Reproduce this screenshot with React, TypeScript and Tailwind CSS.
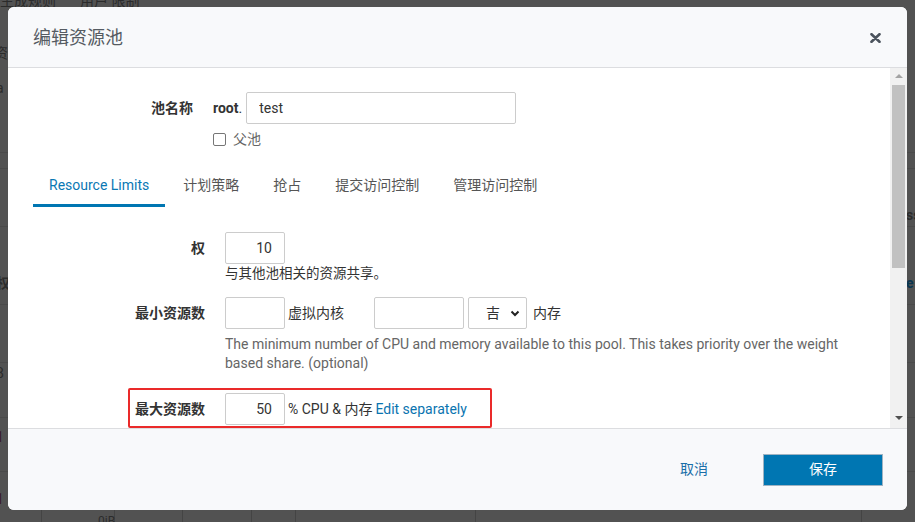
import React from 'react'

const font = "font-['Roboto','Noto_Sans_CJK_SC',sans-serif]"

function Backdrop() {
  // faint page content behind the dimmed overlay
  const rows = [152, 168, 226, 304, 362, 417, 471]
  const cols = [41, 114, 182, 251, 295, 475, 861]
  return (
    <div className="absolute inset-0">
      {rows.map((y) => (
        <div key={y} className="absolute left-0 h-px w-full bg-[#4a4a4a]" style={{ top: y }} />
      ))}
      {cols.map((x) => (
        <div key={x} className="absolute top-[510px] h-[12px] w-px bg-[#444]" style={{ left: x }} />
      ))}
      <span className="absolute -top-[9px] left-[0px] text-[14px] text-[#2b2b2b]">生成规则</span>
      <span className="absolute -top-[9px] left-[80px] text-[14px] text-[#2b2b2b]">用户 限制</span>
      <span className="absolute left-[-6px] top-[43px] text-[14px] text-[#2b2b2b]">资</span>
      <span className="absolute left-[-4px] top-[78px] text-[14px] text-[#2b2b2b]">a</span>
      <span className="absolute left-[-4px] top-[273px] text-[14px] font-bold text-[#2b2b2b]">权</span>
      <span className="absolute left-[-4px] top-[363px] text-[14px] text-[#2b2b2b]">8</span>
      <span className="absolute left-[-4px] top-[427px] text-[14px] text-[#3a1a2a]">1</span>
      <span className="absolute left-[-4px] top-[489px] text-[14px] text-[#3a1a2a]">1</span>
      <span className="absolute left-[906px] top-[205px] text-[14px] font-bold text-[#2b2b2b]">ss</span>
      <span className="absolute left-[906px] top-[273px] text-[14px] font-bold text-[#0a3550]">e</span>
      <span className="absolute left-[98px] top-[512px] text-[12px] text-[#2b2b2b]">0iB</span>
    </div>
  )
}

function Label({ children, w }: { children: React.ReactNode; w: string }) {
  return <div className={`${w} shrink-0 text-right text-[14px] font-bold text-[#333]`}>{children}</div>
}

function Scrollbar() {
  return (
    <div className="flex w-[17px] shrink-0 flex-col items-center bg-[#f1f1f1]">
      <div className="mt-[6px] h-0 w-0 border-x-[4px] border-b-[4px] border-x-transparent border-b-[#a3a3a3]" />
      <div className="mt-[7px] h-[183px] w-[13px] bg-[#c1c1c1]" />
      <div className="flex-1" />
      <div className="mb-[8px] h-0 w-0 border-x-[4px] border-t-[4px] border-x-transparent border-t-[#505050]" />
    </div>
  )
}

const tabs = ['Resource Limits', '计划策略', '抢占', '提交访问控制', '管理访问控制']

export default function App() {
  return (
    <div className={`relative h-[522px] w-[915px] overflow-hidden bg-[#525252] ${font}`}>
      <Backdrop />

      <div className="absolute left-[8px] top-[7px] flex h-[503px] w-[899px] flex-col overflow-hidden rounded-[6px] bg-white">
        {/* Header */}
        <div className="flex h-[61px] shrink-0 items-center justify-between border-b border-[#dcdde0] bg-[#f8f9fb] pl-[25px] pr-[26px]">
          <h4 className="text-[18px] font-normal text-[#555b62]">编辑资源池</h4>
          <svg width="11" height="10" viewBox="0 0 11 10" className="mt-[1px]">
            <path d="M1.5 1.2 L9.5 8.8 M9.5 1.2 L1.5 8.8" stroke="#4b535d" strokeWidth="2.6" strokeLinecap="round" />
          </svg>
        </div>

        {/* Body */}
        <div className="flex h-[360px] shrink-0">
          <div className="relative flex-1 overflow-hidden pl-[25px]">
            {/* Pool name */}
            <div className="mt-[24px] flex h-[32px] items-center">
              <Label w="w-[160px]">池名称</Label>
              <span className="ml-[20px] text-[14px] font-bold text-[#333]">root</span>
              <span className="text-[14px] text-[#333]">.</span>
              <input
                readOnly
                value="test"
                className="ml-[4px] h-[32px] w-[270px] rounded-[2px] border border-[#ccc] px-[12px] text-[14px] text-[#333] outline-none"
              />
            </div>
            <div className="ml-[180px] mt-[5px] flex h-[20px] items-center">
              <div className="h-[13px] w-[13px] rounded-[2px] border border-[#767676] bg-white" />
              <span className="ml-[7px] text-[14px] text-[#666]">父池</span>
            </div>

            {/* Tabs */}
            <div className="mt-[16px] flex gap-[2px]">
              {tabs.map((t, i) => (
                <div
                  key={t}
                  className={`flex h-[42px] items-center border-b-[3px] px-[16px] pt-[1px] text-[14px] ${
                    i === 0 ? 'border-[#0076b2] text-[#0a78b4]' : 'border-transparent text-[#555]'
                  }`}
                >
                  {t}
                </div>
              ))}
            </div>

            {/* Weight */}
            <div className="mt-[25px] flex h-[32px] items-center">
              <Label w="w-[172px]">权</Label>
              <input
                readOnly
                value="10"
                className="ml-[20px] h-[32px] w-[60px] rounded-[2px] border border-[#ccc] pr-[12px] text-right text-[14px] text-[#333] outline-none"
              />
            </div>
            <div className="ml-[192px] text-[13.5px] leading-[19px] text-[#333]">与其他池相关的资源共享。</div>

            {/* Min resources */}
            <div className="mt-[14px] flex h-[32px] items-center">
              <Label w="w-[172px]">最小资源数</Label>
              <input readOnly className="ml-[20px] h-[32px] w-[60px] rounded-[2px] border border-[#ccc] outline-none" />
              <span className="ml-[3px] text-[14px] text-[#333]">虚拟内核</span>
              <input readOnly className="ml-[30px] h-[32px] w-[90px] rounded-[2px] border border-[#ccc] outline-none" />
              <div className="ml-[4px] flex h-[32px] w-[59px] items-center rounded-[2px] border border-[#ccc] pl-[17px] pr-[6px] text-[14px] text-[#333]">
                <span className="flex-1">吉</span>
                <svg width="10" height="7" viewBox="0 0 10 7">
                  <path d="M1.5 1.5 L5 5 L8.5 1.5" fill="none" stroke="#222" strokeWidth="2" />
                </svg>
              </div>
              <span className="ml-[6px] text-[14px] text-[#333]">内存</span>
            </div>
            <div className="ml-[192px] mt-[6px] w-[640px] text-[14px] leading-[19px] text-[#666]">
              The minimum number of CPU and memory available to this pool. This takes priority over the weight based
              share. (optional)
            </div>

            {/* Max resources */}
            <div className="relative mt-[20px] flex h-[32px] items-center">
              <div className="absolute left-[95px] top-[-5px] h-[40px] w-[364px] rounded-[2px] border-2 border-[#ea2a2a]" />
              <Label w="w-[172px]">最大资源数</Label>
              <input
                readOnly
                value="50"
                className="ml-[20px] h-[32px] w-[60px] rounded-[2px] border border-[#ccc] pr-[12px] text-right text-[14px] text-[#333] outline-none"
              />
              <span className="ml-[3px] text-[14px] text-[#333]">% CPU &amp; 内存</span>
              <span className="ml-[3px] text-[14px] text-[#0a74b0]">Edit separately</span>
            </div>
          </div>
          <Scrollbar />
        </div>

        {/* Footer */}
        <div className="flex h-[82px] shrink-0 items-center justify-end border-t border-[#dcdde0] bg-[#f8f9fb] pr-[24px]">
          <span className="mr-[55px] text-[14px] text-[#1a6fa8]">取消</span>
          <button className="h-[32px] w-[120px] border border-[#9fb3c2] bg-[#0076b2] text-[14px] text-white">保存</button>
        </div>
      </div>
    </div>
  )
}
